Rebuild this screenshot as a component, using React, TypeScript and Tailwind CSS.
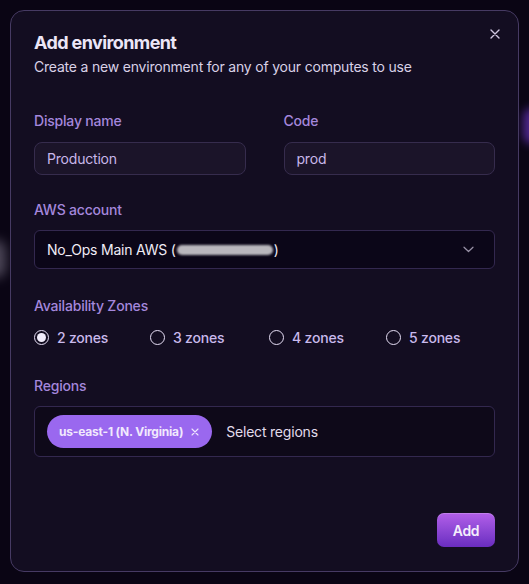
import React from "react";

function Radio({ label, checked, w }: { label: string; checked?: boolean; w: string }) {
  return (
    <label className={`flex items-center gap-2 shrink-0 ${w}`}>
      <span className="w-[15px] h-[15px] rounded-full border-[1.5px] border-[#e6def5] flex items-center justify-center">
        {checked && <span className="w-[9px] h-[9px] rounded-full bg-[#f1ecfb]" />}
      </span>
      <span className="text-[14px] font-medium text-[#c9b9ec] tracking-[-0.2px]">{label}</span>
    </label>
  );
}

export default function App() {
  return (
    <div
      className="relative w-[529px] h-[584px] bg-[#0a0514] overflow-hidden"
      style={{ fontFamily: "Inter, 'Noto Sans', sans-serif" }}
    >
      <div className="absolute right-[-12px] top-[108px] w-[18px] h-[36px] rounded-full bg-[#6a35c0] opacity-70 blur-[5px]" />
      <div className="absolute left-[-14px] top-[240px] w-[20px] h-[38px] rounded-full bg-[#7a7386] opacity-60 blur-[6px]" />
      <div className="p-[10px] pb-[12px] h-full">
        <div className="relative h-full rounded-[14px] border border-[#463a63] bg-[#130d21] px-[23px] pt-[20px] pb-[24px] flex flex-col">
          <button className="absolute right-[18px] top-[18px] text-[#cfc6e0]">
            <svg width="10" height="10" viewBox="0 0 10 10" fill="none" stroke="currentColor" strokeWidth="1.4" strokeLinecap="round">
              <path d="M1 1L9 9M9 1L1 9" />
            </svg>
          </button>
          <h2 className="text-[18px] font-bold text-[#ece6f7] tracking-[-0.6px] leading-[24px]">Add environment</h2>
          <p className="mt-[2px] text-[14px] text-[#d9d1e7] tracking-[-0.2px] leading-[20px]">
            Create a new environment for any of your computes to use
          </p>

          <div className="mt-[34px] grid grid-cols-2 gap-x-[38px]">
            <div>
              <div className="text-[14px] font-medium text-[#a487dc] leading-[20px] tracking-[-0.2px]">Display name</div>
              <div className="mt-[11px] h-[33px] rounded-[8px] border border-[#362c4d] bg-[#1b1429] flex items-center px-[12px] text-[14px] text-[#c8b7ea] tracking-[-0.2px]">
                Production
              </div>
            </div>
            <div>
              <div className="text-[14px] font-medium text-[#a487dc] leading-[20px] tracking-[-0.2px]">Code</div>
              <div className="mt-[11px] h-[33px] rounded-[8px] border border-[#362c4d] bg-[#1b1429] flex items-center px-[12px] text-[14px] text-[#c8b7ea] tracking-[-0.2px]">
                prod
              </div>
            </div>
          </div>

          <div className="mt-[25px] text-[14px] font-medium text-[#a487dc] leading-[20px] tracking-[-0.2px]">AWS account</div>
          <div className="mt-[10px] h-[39px] rounded-[6px] border border-[#33284f] bg-[#0b0618] flex items-center justify-between pl-[12px] pr-[20px]">
            <span className="flex items-center text-[14px] text-[#f0ecf6] tracking-[-0.2px]">
              No_Ops Main AWS (
              <span className="inline-block w-[96px] h-[10px] mx-[1px] rounded-full bg-[#b9b7bd] blur-[0.8px]" />)
            </span>
            <svg width="11" height="7" viewBox="0 0 11 7" fill="none" stroke="#9a93a8" strokeWidth="1.2" strokeLinecap="round" strokeLinejoin="round">
              <path d="M1 1.2L5.5 5.5L10 1.2" />
            </svg>
          </div>

          <div className="mt-[27px] text-[14px] font-medium text-[#a487dc] leading-[20px] tracking-[-0.2px]">Availability Zones</div>
          <div className="mt-[11px] flex">
            <Radio label="2 zones" checked w="w-[116px]" />
            <Radio label="3 zones" w="w-[119px]" />
            <Radio label="4 zones" w="w-[117px]" />
            <Radio label="5 zones" w="w-[90px]" />
          </div>

          <div className="mt-[28px] text-[14px] font-medium text-[#a487dc] leading-[20px] tracking-[-0.2px]">Regions</div>
          <div className="mt-[10px] h-[51px] rounded-[6px] border border-[#33284f] bg-[#0e0919] flex items-center px-[12px] gap-[14px]">
            <span className="h-[33px] rounded-full bg-[#9a68ef] flex items-center pl-[12px] pr-[13px] gap-[8px]">
              <span className="text-[12px] font-bold text-[#f1eafd] tracking-[-0.2px]">us-east-1 (N. Virginia)</span>
              <svg width="8" height="8" viewBox="0 0 8 8" fill="none" stroke="#efe7fd" strokeWidth="1.1" strokeLinecap="round">
                <path d="M1 1L7 7M7 1L1 7" />
              </svg>
            </span>
            <span className="text-[14px] text-[#e2dcec] tracking-[-0.2px]">Select regions</span>
          </div>

          <div className="mt-auto flex justify-end">
            <button className="h-[34px] w-[58px] rounded-[7px] bg-gradient-to-b from-[#b35fe9] to-[#6a2cc0] text-[14px] font-semibold text-[#f4eefc] tracking-[-0.3px] shadow-[inset_0_1px_0_rgba(255,255,255,0.2)]">
              Add
            </button>
          </div>
        </div>
      </div>
    </div>
  );
}
